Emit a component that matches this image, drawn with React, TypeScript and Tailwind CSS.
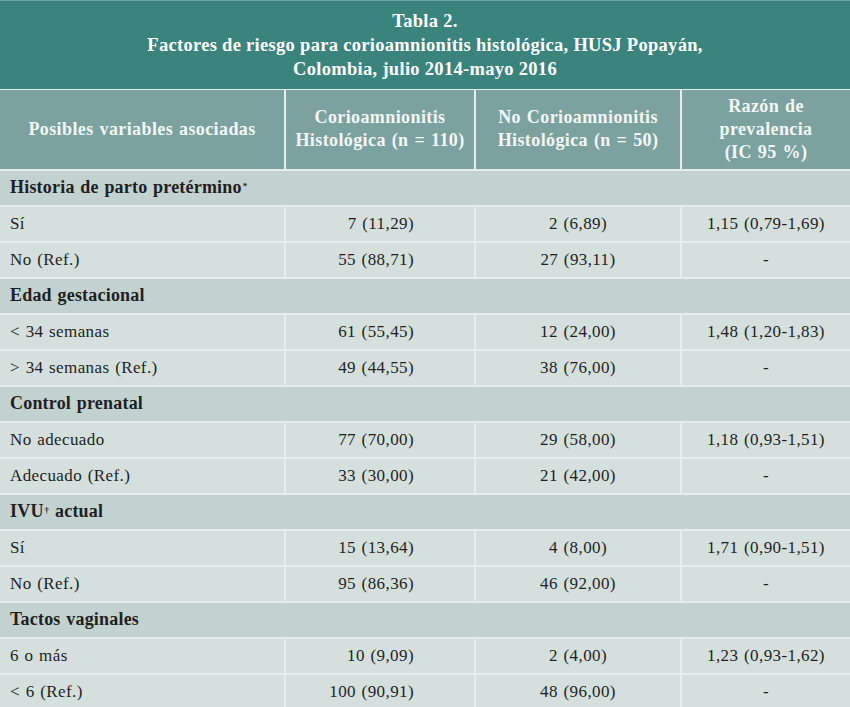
type Row =
  | { kind: "group"; label: React.ReactNode }
  | { kind: "data"; label: string; a: string; b: string; rp: string }

const rows: Row[] = [
  { kind: "group", label: <>Historia de parto pretérmino<sup className="text-[9px] ml-[1px]">*</sup></> },
  { kind: "data", label: "Sí", a: "7 (11,29)", b: "2 (6,89)", rp: "1,15 (0,79-1,69)" },
  { kind: "data", label: "No (Ref.)", a: "55 (88,71)", b: "27 (93,11)", rp: "-" },
  { kind: "group", label: "Edad gestacional" },
  { kind: "data", label: "< 34 semanas", a: "61 (55,45)", b: "12 (24,00)", rp: "1,48 (1,20-1,83)" },
  { kind: "data", label: "> 34 semanas (Ref.)", a: "49 (44,55)", b: "38 (76,00)", rp: "-" },
  { kind: "group", label: "Control prenatal" },
  { kind: "data", label: "No adecuado", a: "77 (70,00)", b: "29 (58,00)", rp: "1,18 (0,93-1,51)" },
  { kind: "data", label: "Adecuado (Ref.)", a: "33 (30,00)", b: "21 (42,00)", rp: "-" },
  { kind: "group", label: <>IVU<sup className="text-[9px] ml-[1px]">†</sup> actual</> },
  { kind: "data", label: "Sí", a: "15 (13,64)", b: "4 (8,00)", rp: "1,71 (0,90-1,51)" },
  { kind: "data", label: "No (Ref.)", a: "95 (86,36)", b: "46 (92,00)", rp: "-" },
  { kind: "group", label: "Tactos vaginales" },
  { kind: "data", label: "6 o más", a: "10 (9,09)", b: "2 (4,00)", rp: "1,23 (0,93-1,62)" },
  { kind: "data", label: "< 6 (Ref.)", a: "100 (90,91)", b: "48 (96,00)", rp: "-" },
]

export default function App() {
  return (
    <div className="w-[850px] h-[707px] overflow-hidden bg-[#d4dfde] text-[#231f20] font-['Liberation_Serif','DejaVu_Serif',serif]">
      {/* title band */}
      <div className="h-[89px] bg-[#3b837d] border-t border-[#6fa5a0] flex flex-col items-center justify-center text-white font-bold text-[18.5px] leading-[24px] tracking-[0.3px]">
        <div>Tabla 2.</div>
        <div>Factores de riesgo para corioamnionitis histológica, HUSJ Popayán,</div>
        <div>Colombia, julio 2014-mayo 2016</div>
      </div>

      <table className="w-[850px] border-collapse table-fixed">
        <colgroup>
          <col className="w-[285px]" />
          <col className="w-[190px]" />
          <col className="w-[206px]" />
          <col className="w-[169px]" />
        </colgroup>
        <thead>
          <tr className="h-[80px] bg-[#7ba29e] text-[#f4f7f6] text-[18px] leading-[23px] tracking-[0.4px] [word-spacing:1px] border-t border-[#e6eeed]">
            <th className="font-bold text-center px-2">Posibles variables asociadas</th>
            <th className="font-bold text-center px-0 border-l-2 border-[#e6eeed]">Corioamnionitis<br />Histológica (n = 110)</th>
            <th className="font-bold text-center px-0 border-l-2 border-[#e6eeed]">No Corioamnionitis<br />Histológica (n = 50)</th>
            <th className="font-bold text-center px-0 border-l-2 border-[#e6eeed]">Razón de<br />prevalencia<br />(IC 95 %)</th>
          </tr>
        </thead>
        <tbody className="text-[17px] tracking-[0.4px] [word-spacing:1px]">
          {rows.map((r, i) =>
            r.kind === "group" ? (
              <tr key={i} className="h-[36px] bg-[#c2d2d1] border-t-2 border-[#e6eeed]">
                <td colSpan={4} className="pl-[10px] font-bold text-[18px] tracking-[0.2px]">{r.label}</td>
              </tr>
            ) : (
              <tr key={i} className="h-[36px] bg-[#d4dfde] border-t-2 border-[#e6eeed]">
                <td className="pl-[10px]">{r.label}</td>
                <td className="text-right pr-[60px] border-l-2 border-[#e6eeed]">{r.a}</td>
                <td className="text-center border-l-2 border-[#e6eeed]">{r.b}</td>
                <td className="text-center border-l-2 border-[#e6eeed]">{r.rp}</td>
              </tr>
            )
          )}
        </tbody>
      </table>
    </div>
  )
}
